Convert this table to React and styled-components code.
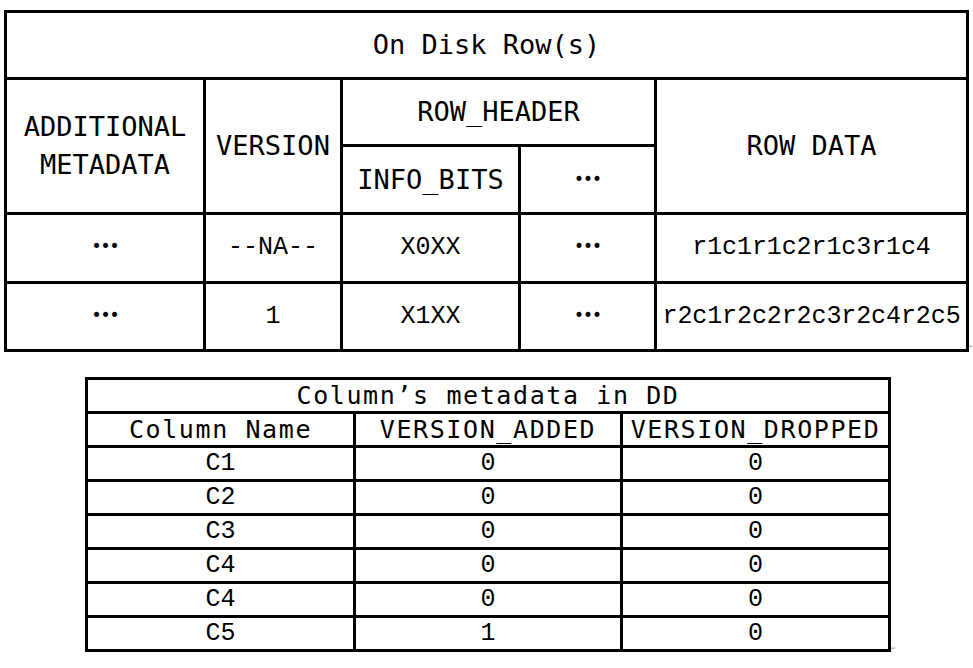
import styled, { createGlobalStyle } from 'styled-components';

const GlobalStyle = createGlobalStyle`
    html, body {
        margin: 0;
        background: #fff;
        color: #000;
    }
`;

const Page = styled.div`
    display: flex;
    flex-direction: column;
    gap: 25px;
    padding-top: 10px;
`;

const Block = styled.div`
    display: flex;
    align-items: flex-end;
    margin-left: ${(p) => p.$left}px;
`;

const Grid = styled.table`
    border-collapse: collapse;
    table-layout: fixed;
    width: ${(p) => p.$width}px;
    border: 3px solid #000;
`;

const Row = styled.tr`
    height: ${(p) => p.$h}px;
`;

const Cell = styled.td`
    border: 3px solid #000;
    padding: 0 2px;
    text-align: center;
    vertical-align: middle;
    white-space: ${(p) => (p.$wrap ? 'normal' : 'nowrap')};
    font-family: ${(p) => (p.$head ? '"DejaVu Sans Mono"' : '"Liberation Mono"')}, monospace;
    font-weight: 400;
    font-size: ${(p) => p.$size || 25}px;
    letter-spacing: ${(p) => p.$spacing || 0}px;
    line-height: ${(p) => p.$lh || 30}px;
    color: #000;
    overflow: hidden;
`;

const Dots = styled.span`
    font-family: "DejaVu Sans", sans-serif;
    font-size: 17px;
    letter-spacing: -1px;
    position: relative;
    top: -2px;
`;

const Mark = styled.span`
    font-family: "DejaVu Sans", sans-serif;
    font-size: 6px;
    line-height: 6px;
    color: #9a9a9a;
    margin-bottom: ${(p) => p.$bottom || 0}px;
`;

const Ellipsis = () => <Dots>•••</Dots>;

const TopHead = (props) => <Cell as="th" $head $size={27} $lh={38} {...props} />;
const LowHead = (props) => <Cell as="th" $head $size={25} $spacing={1.6} {...props} />;

const diskRows = [
    { version: '--NA--', bits: 'X0XX', data: 'r1c1r1c2r1c3r1c4', h: 69 },
    { version: '1', bits: 'X1XX', data: 'r2c1r2c2r2c3r2c4r2c5', h: 68 },
];

const columns = [
    ['C1', '0', '0'],
    ['C2', '0', '0'],
    ['C3', '0', '0'],
    ['C4', '0', '0'],
    ['C4', '0', '0'],
    ['C5', '1', '0'],
];

const App = () => {
    return (
        <>
            <GlobalStyle />
            <Page>
                <Block $left={4}>
                    <Grid $width={962}>
                        <colgroup>
                            <col style={{ width: 199 }} />
                            <col style={{ width: 137 }} />
                            <col style={{ width: 178 }} />
                            <col style={{ width: 136 }} />
                            <col style={{ width: 312 }} />
                        </colgroup>
                        <thead>
                            <Row $h={67}>
                                <TopHead colSpan={5}>On Disk Row(s)</TopHead>
                            </Row>
                            <Row $h={67}>
                                <TopHead rowSpan={2} $wrap>
                                    ADDITIONAL METADATA
                                </TopHead>
                                <TopHead rowSpan={2}>VERSION</TopHead>
                                <TopHead colSpan={2}>ROW_HEADER</TopHead>
                                <TopHead rowSpan={2}>ROW DATA</TopHead>
                            </Row>
                            <Row $h={68}>
                                <TopHead>INFO_BITS</TopHead>
                                <TopHead>
                                    <Ellipsis />
                                </TopHead>
                            </Row>
                        </thead>
                        <tbody>
                            {diskRows.map((r) => (
                                <Row $h={r.h} key={r.data}>
                                    <Cell>
                                        <Ellipsis />
                                    </Cell>
                                    <Cell>{r.version}</Cell>
                                    <Cell>{r.bits}</Cell>
                                    <Cell>
                                        <Ellipsis />
                                    </Cell>
                                    <Cell $spacing={-0.1}>{r.data}</Cell>
                                </Row>
                            ))}
                        </tbody>
                    </Grid>
                    <Mark $bottom={3}>↵</Mark>
                </Block>

                <Block $left={85}>
                    <Grid $width={803}>
                        <colgroup>
                            <col style={{ width: 268 }} />
                            <col style={{ width: 267 }} />
                            <col style={{ width: 268 }} />
                        </colgroup>
                        <thead>
                            <Row $h={34}>
                                <LowHead colSpan={3}>Column’s metadata in DD</LowHead>
                            </Row>
                            <Row $h={34}>
                                <LowHead>Column Name</LowHead>
                                <LowHead>VERSION_ADDED</LowHead>
                                <LowHead>VERSION_DROPPED</LowHead>
                            </Row>
                        </thead>
                        <tbody>
                            {columns.map((c, i) => (
                                <Row $h={34} key={i}>
                                    <Cell>{c[0]}</Cell>
                                    <Cell>{c[1]}</Cell>
                                    <Cell>{c[2]}</Cell>
                                </Row>
                            ))}
                        </tbody>
                    </Grid>
                    <Mark $bottom={1}>↵</Mark>
                </Block>
            </Page>
        </>
    );
};

export default App;
